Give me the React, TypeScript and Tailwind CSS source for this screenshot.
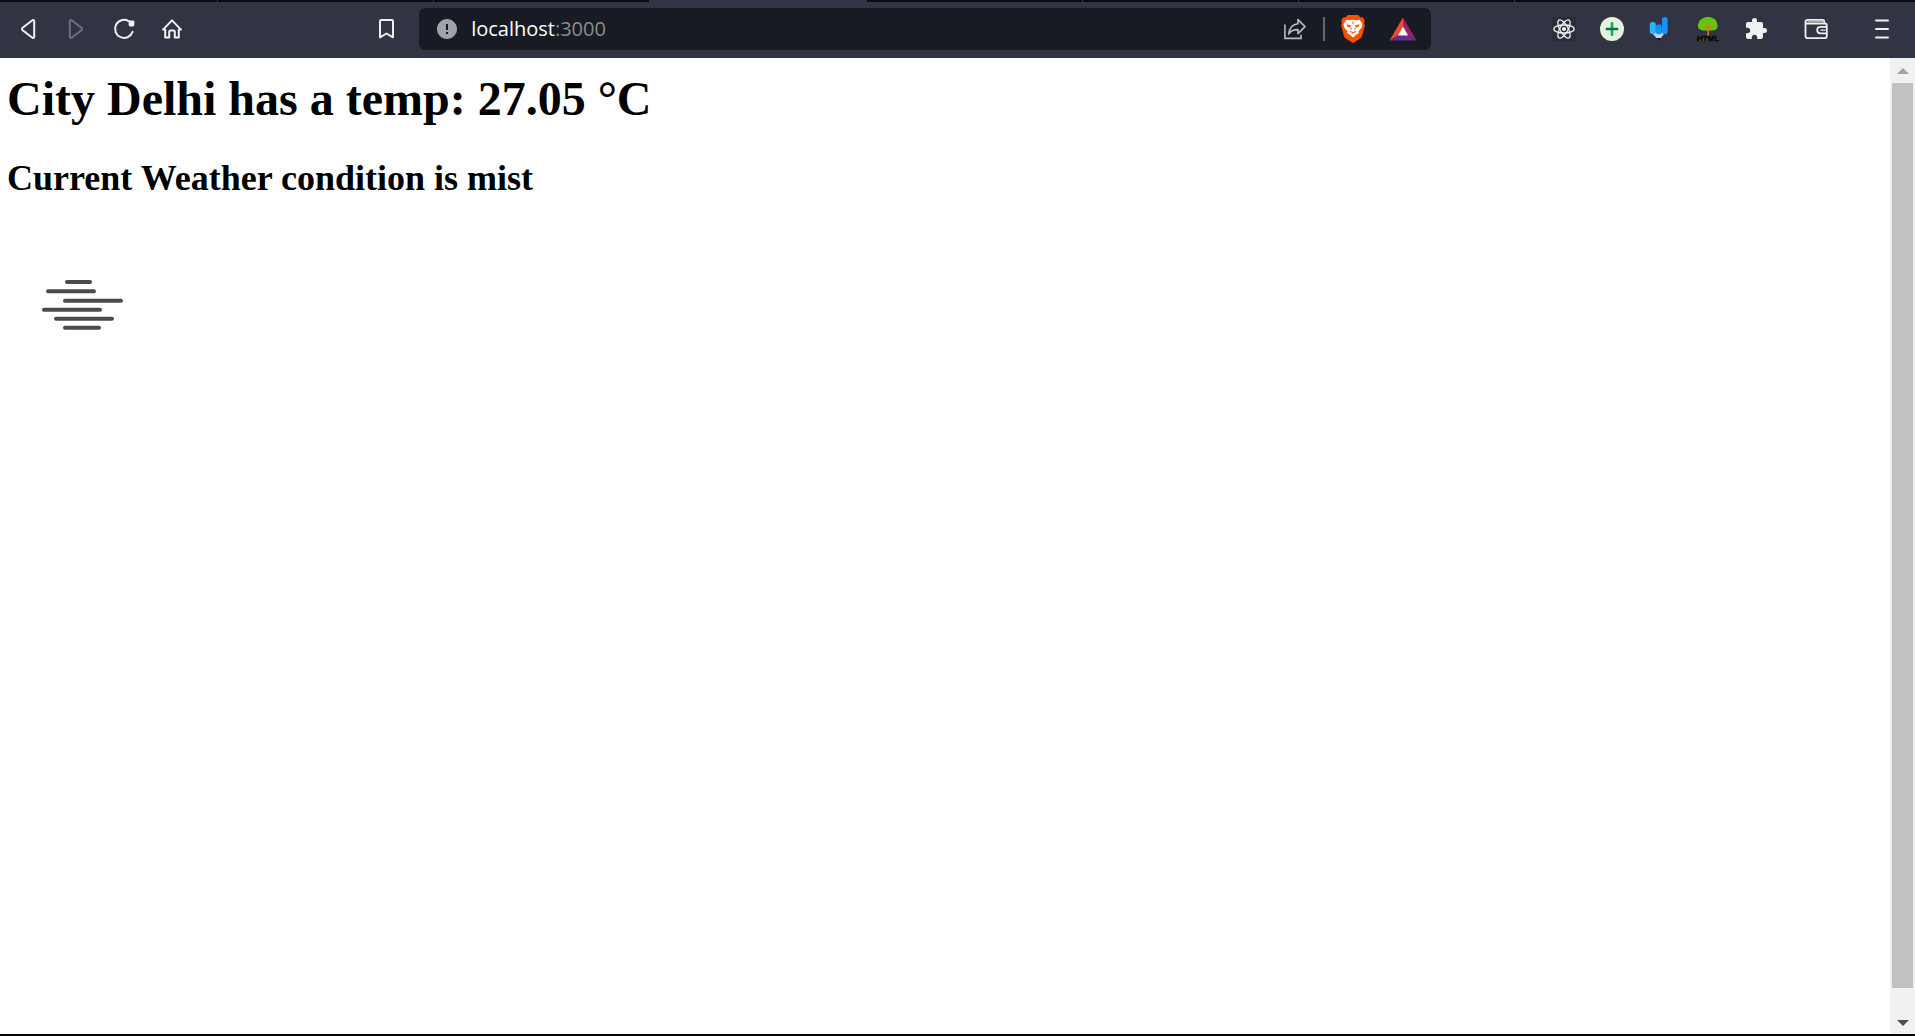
import type { ReactNode } from "react";
import { MdError, MdExtension } from "react-icons/md";

function ToolButton({ label, children, disabled = false }: { label: string; children: ReactNode; disabled?: boolean }) {
  return (
    <button type="button" aria-label={label} disabled={disabled} className="flex h-12 w-12 shrink-0 items-center justify-center">
      {children}
    </button>
  );
}

const stroke = { fill: "none", stroke: "#f0f0f0", strokeWidth: 2, strokeLinejoin: "round", strokeLinecap: "round" } as const;

function BackIcon() {
  return (
    <svg width="24" height="24" viewBox="0 0 24 24" {...stroke}>
      <path d="M18.2 4.2v15.6c0 1-1 1.6-1.8.9L6.6 13.2c-.8-.7-.8-1.7 0-2.4l9.8-7.5c.8-.7 1.8-.1 1.8.9Z" />
    </svg>
  );
}

function ForwardIcon() {
  return (
    <svg width="24" height="24" viewBox="0 0 24 24" {...stroke} stroke="#6c6f7c">
      <path d="M5.8 4.2v15.6c0 1 1 1.6 1.8.9l9.8-7.5c.8-.7.8-1.7 0-2.4L7.6 3.3c-.8-.7-1.8-.1-1.8.9Z" />
    </svg>
  );
}

function ReloadIcon() {
  return (
    <svg width="24" height="24" viewBox="0 0 24 24" {...stroke}>
      <path d="M16.6 4.1A9 9 0 1 0 20.6 14.7" />
      <path d="M17 3.4h4c.8 0 1.4.6 1.4 1.4v2.6c0 1.2-1 2.2-2.2 2.2h-1.4c-1.2 0-2.2-1-2.2-2.2Z" fill="#f0f0f0" stroke="none" />
    </svg>
  );
}

function HomeIcon() {
  return (
    <svg width="24" height="24" viewBox="0 0 24 24" {...stroke}>
      <path d="M3 12.6 12 3.4l9 9.2h-2.2v7.9h-4v-5.7c0-.7-.5-1.2-1.2-1.2h-3.2c-.7 0-1.2.5-1.2 1.2v5.7h-4v-7.9Z" />
    </svg>
  );
}

function BookmarkIcon() {
  return (
    <svg width="24" height="24" viewBox="0 0 24 24" {...stroke}>
      <path d="M6.3 3h10.4c.7 0 1.3.6 1.3 1.3v16l-6.5-3.8L5 20.3v-16C5 3.6 5.6 3 6.3 3Z" />
    </svg>
  );
}

function ShareIcon() {
  return (
    <svg width="24" height="24" viewBox="0 0 24 24" fill="none" stroke="#b9babd" strokeWidth="1.6">
      <path d="M1.9 7.5V21.4H18v-3.6" />
      <path d="M15 2.6 22 9.6 15 16.6v-4c-4.5-.1-7.5 1.4-9.3 4.6C6.3 10.6 9.6 7.2 15 6.7Z" strokeLinejoin="round" />
    </svg>
  );
}

function BraveIcon() {
  return (
    <svg width="28" height="28" viewBox="-2 0 28 28">
      <path d="M6.8 0h10.4l2.2 2.4c1.4-.3 2.4 0 3.2 1.2l1.2 2-.8 2.4.8 2.4-2.6 10.2c-.4 1.4-1.2 2.2-2.4 3.1L12 28l-6.8-4.3c-1.2-.9-2-1.700-2.4-3.1L.2 10.4 1 8 .2 5.6l1.2-2c.8-1.2 1.8-1.5 3.2-1.2Z" fill="#ff5000" />
      <path d="M5.5 4.800 9 5.300c2-.5 4-.5 6 0l3.500-.5 3 4.200-.8 3.500-3.200 3.800.3 2-2.300 1.200L12 22.500l-3.500-3-2.300-1.200.3-2-3.200-3.800L2.500 9Z" fill="#fff" />
      <path d="M5.5 9.200 10 10.600l-.8 1.800-2.800-.6ZM18.500 9.200 14 10.600l.8 1.800 2.800-.6Z" fill="#ff5000" />
      <path d="M12 6.200v3.200M8.700 16.300 12 17.800l3.300-1.500M12 17.800v1.200M10.200 12.800l-.4 2M13.800 12.800l.4 2" stroke="#ff5000" strokeWidth="1" fill="none" />
    </svg>
  );
}

function RewardsIcon() {
  return (
    <svg width="28" height="24" viewBox="0 0 28 24">
      <path d="M14 .5.5 23.5 8.8 18.6 14 9.5Z" fill="#ff4724" />
      <path d="M14 .5 27.5 23.5 19.2 18.6 14 9.5Z" fill="#9e1f63" />
      <path d="M.5 23.5h27L19.2 18.6H8.8Z" fill="#662d91" />
      <path d="m14 9.5 5.2 9.1H8.8Z" fill="#fff" />
    </svg>
  );
}

function ReactIcon() {
  return (
    <svg width="24" height="24" viewBox="0 0 24 24" fill="none" stroke="#f4f4f4" strokeWidth="1.3">
      <rect width="24" height="24" rx="2" fill="#292c3a" stroke="none" />
      <ellipse cx="12" cy="12" rx="10.2" ry="4" />
      <ellipse cx="12" cy="12" rx="10.2" ry="4" transform="rotate(60 12 12)" />
      <ellipse cx="12" cy="12" rx="10.2" ry="4" transform="rotate(120 12 12)" />
      <circle cx="12" cy="12" r="2" fill="#f4f4f4" stroke="none" />
    </svg>
  );
}

function PlusIcon() {
  return (
    <svg width="24" height="24" viewBox="0 0 24 24">
      <circle cx="12" cy="12" r="12" fill="#e3f3de" />
      <path d="M12 6.3v11.4" stroke="#16a765" strokeWidth="2.6" strokeLinecap="round" />
      <path d="M6.8 12h10.4" stroke="#0a7050" strokeWidth="2.6" strokeLinecap="round" />
    </svg>
  );
}

function PencilHandIcon() {
  return (
    <svg width="24" height="24" viewBox="0 0 24 24">
      <path d="M3.5 15.5h13.5L13 21H8.5Z" fill="#b9d9ee" />
      <path d="M8.5 21H13l-2.2 3Z" fill="#17181c" />
      <rect x="1.8" y="5" width="6" height="12" rx="2.6" fill="#2cb4ff" />
      <rect x="8" y="7.3" width="5.6" height="10" rx="2.6" fill="#0c96ec" />
      <rect x="14" y="0" width="5.6" height="17" rx="2.6" fill="#1690ff" />
    </svg>
  );
}

function TreeIcon() {
  return (
    <svg width="24" height="24" viewBox="0 0 24 24" className="overflow-visible">
      <path d="M7 1.3C10-.4 14-.4 17 1.3c2.2.8 3.4 2.6 3.7 4.5 2.3 3.4.3 7.7-4.2 7.7h-9c-4.5 0-7.3-3.8-4.7-7.7C3.2 3.7 4.8 2 7 1.3Z" fill="#62c70b" />
      <path d="M12.2 5.5V19M12.5 13l5-5.5M12 12 7.5 8" stroke="#c88720" strokeWidth="1.5" fill="none" />
      <path d="M3 23h18" stroke="#81501e" strokeWidth="1.5" />
      <text x="12" y="23.5" textAnchor="middle" fontFamily="Liberation Sans, sans-serif" fontWeight="700" fontSize="8" fill="#08080a" stroke="#08080a" strokeWidth=".5">HTML</text>
    </svg>
  );
}

function WalletIcon() {
  return (
    <svg width="24" height="24" viewBox="0 0 24 24" {...stroke} strokeWidth="1.8">
      <path d="M1.5 5v14c0 1.3.9 2.2 2.2 2.2h17c1.2 0 2.1-.9 2.1-2.2V8.7c0-1.3-.9-2.2-2.1-2.2H3M1.5 5c0-1.3.9-2.2 2.2-2.2h14.6c1.2 0 2 .8 2 2v1.7" />
      <path d="M4 4.8h15" stroke="#a7a9b2" strokeWidth="1.4" />
      <path d="M22.5 9.8h-6c-2 0-3.3 1.5-3.3 3.3s1.3 3.3 3.3 3.3h6" />
      <path d="M17 13.1h4" strokeWidth="1.4" />
    </svg>
  );
}

function MenuIcon() {
  return (
    <svg width="14" height="24" viewBox="0 0 14 24" {...stroke}>
      <path d="M1 3.5h12M1 12h12M1 20.5h12" />
    </svg>
  );
}

function MistIcon() {
  return (
    <svg width="150" height="150" viewBox="0 0 150 150" role="img" aria-label="mist" stroke="#4b4b4d" strokeWidth="4" strokeLinecap="round">
      <path d="M60 53h23M41 62.3h46M58 71.7h56M37 80.7h56M49 89.7h56M58 98.7h34" />
    </svg>
  );
}

const tabs = [0, 1, 2, 3, 4, 5, 6];

function TabStrip() {
  return (
    <div className="flex h-0.5 bg-[#090a12] pl-0.5">
      {tabs.map((i) => (
        <div key={i} className={i === 3 ? "w-[11.3%] bg-[#323443]" : "w-[11.3%] border-r border-[#30313b]"} />
      ))}
    </div>
  );
}

function Toolbar() {
  return (
    <nav className="flex h-14 items-center bg-[#323443] pr-[9px] pb-0.5 pl-1">
      <ToolButton label="Back"><BackIcon /></ToolButton>
      <ToolButton label="Forward" disabled><ForwardIcon /></ToolButton>
      <ToolButton label="Reload"><ReloadIcon /></ToolButton>
      <ToolButton label="Home"><HomeIcon /></ToolButton>
      <div className="flex-[167]" />
      <ToolButton label="Bookmark"><BookmarkIcon /></ToolButton>
      <div className="ml-2 flex h-[42px] flex-[997] items-center rounded-md bg-[#181b23] pr-3.5">
        <button type="button" aria-label="Site information" className="ml-4 shrink-0">
          <MdError className="h-6 w-6 text-[#9fa2ac]" />
        </button>
        <label className="relative ml-3 flex h-full flex-1 items-center font-['Open_Sans',sans-serif] text-xl">
          <span aria-hidden="true" className="text-white">localhost<span className="text-[#898b91]">:3000</span></span>
          <input aria-label="Address" defaultValue="localhost:3000" className="absolute inset-0 w-full bg-transparent text-transparent outline-none" />
        </label>
        <button type="button" aria-label="Share" className="mr-4"><ShareIcon /></button>
        <div className="h-6 w-0.5 bg-[#66686e]" />
        <button type="button" aria-label="Shields" className="ml-3.5"><BraveIcon /></button>
        <button type="button" aria-label="Rewards" className="ml-[22px]"><RewardsIcon /></button>
      </div>
      <div className="flex-[109]" />
      <ToolButton label="React tools"><ReactIcon /></ToolButton>
      <ToolButton label="Add"><PlusIcon /></ToolButton>
      <ToolButton label="Pencil"><PencilHandIcon /></ToolButton>
      <ToolButton label="HTML tree"><TreeIcon /></ToolButton>
      <ToolButton label="Extensions"><MdExtension className="h-6 w-6 text-[#f0f0f0]" /></ToolButton>
      <div className="w-3" />
      <ToolButton label="Wallet"><WalletIcon /></ToolButton>
      <div className="w-[18px]" />
      <ToolButton label="Menu"><MenuIcon /></ToolButton>
    </nav>
  );
}

function ScrollBar() {
  return (
    <div aria-hidden="true" className="flex w-[25px] flex-col items-center bg-[#f1f1f1]">
      <div className="flex h-[25px] items-center">
        <svg width="12" height="6" viewBox="0 0 12 6"><path d="m6 0 6 6H0Z" fill="#a3a3a3" /></svg>
      </div>
      <div className="w-[21px] flex-1 bg-[#c1c1c1]" />
      <div className="flex h-[46px] items-end pb-2">
        <svg width="12" height="6" viewBox="0 0 12 6"><path d="M0 0h12L6 6Z" fill="#505050" /></svg>
      </div>
    </div>
  );
}

export default function App() {
  return (
    <div className="flex min-h-screen flex-col border-b-2 border-black bg-white">
      <TabStrip />
      <Toolbar />
      <div className="flex flex-1">
        <main className="flex-1 px-[7px] pt-[13px] font-['Liberation_Serif',serif] font-bold text-black">
          <h1 className="text-5xl leading-[56px]">City Delhi has a temp: 27.05 °C</h1>
          <h2 className="mt-[30px] text-4xl leading-[42px]">Current Weather condition is mist</h2>
          <div className="mt-[30px]"><MistIcon /></div>
        </main>
        <ScrollBar />
      </div>
    </div>
  );
}
